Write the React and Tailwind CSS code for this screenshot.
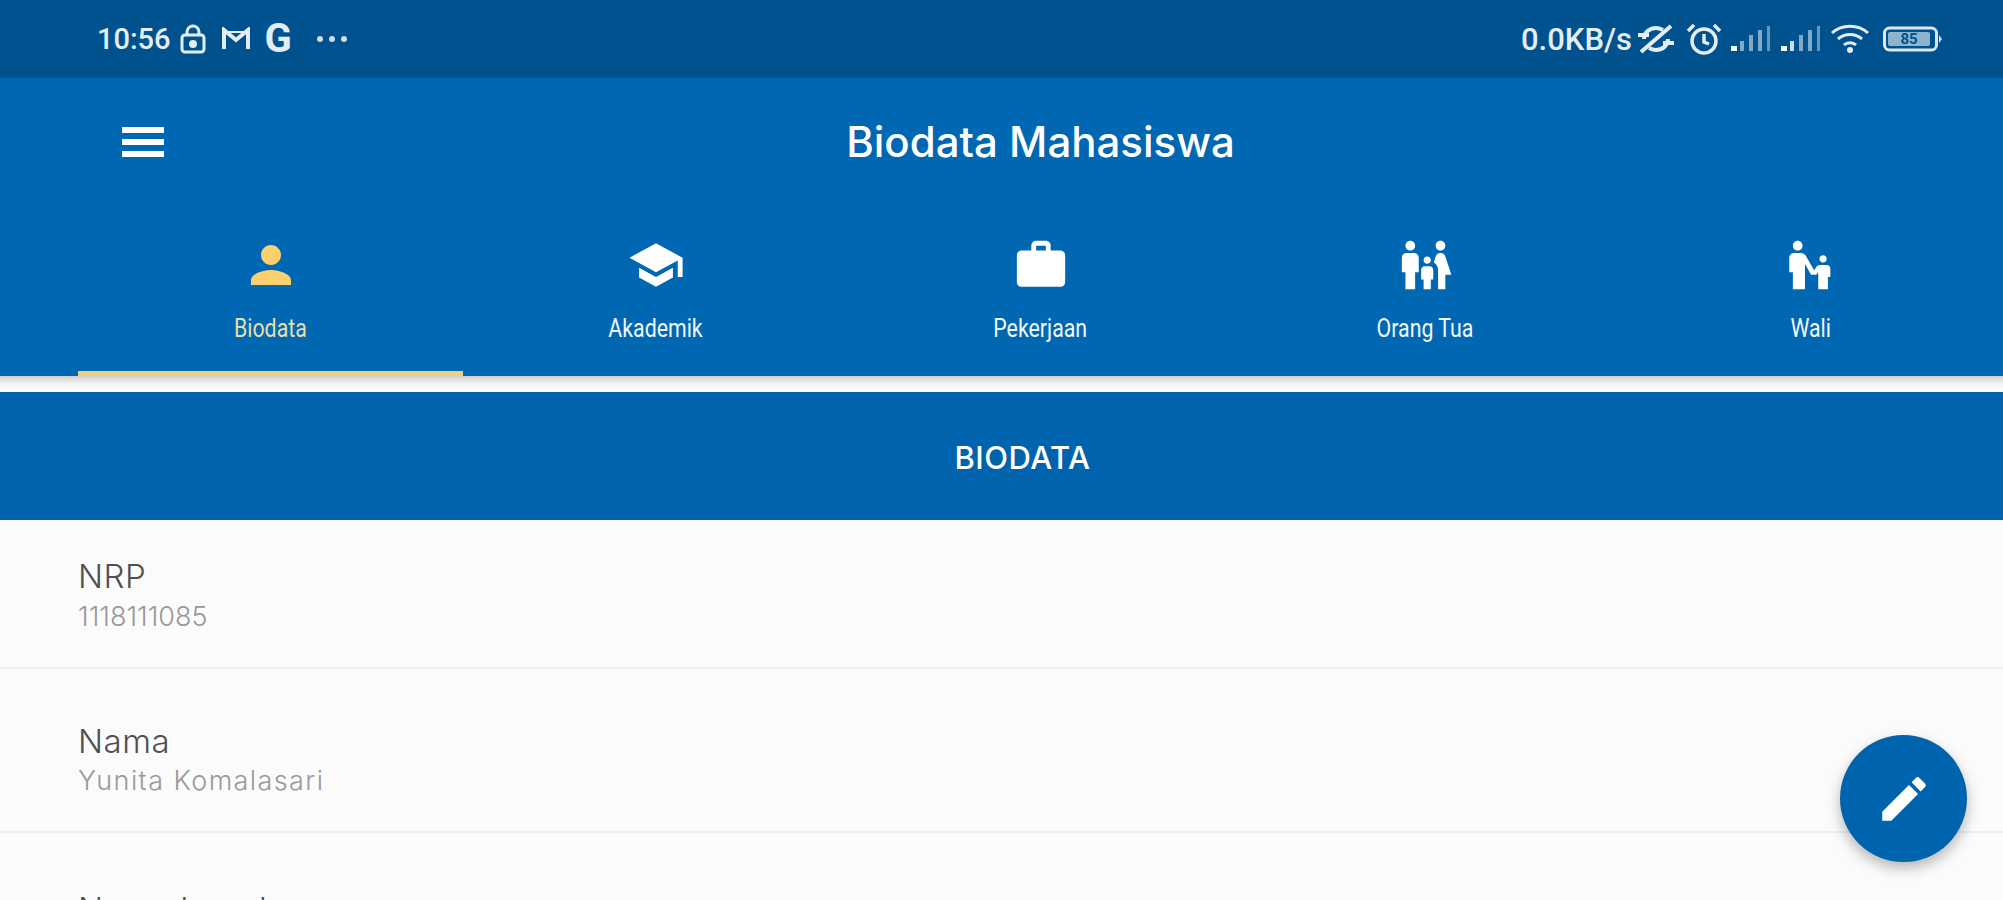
import React from "react";
import { MdPerson, MdSchool, MdWork, MdFamilyRestroom, MdEscalatorWarning, MdEdit } from "react-icons/md";

const tabs = [
  { label: "Biodata", Icon: MdPerson, size: 60, active: true },
  { label: "Akademik", Icon: MdSchool, size: 58 },
  { label: "Pekerjaan", Icon: MdWork, size: 58 },
  { label: "Orang Tua", Icon: MdFamilyRestroom, size: 58 },
  { label: "Wali", Icon: MdEscalatorWarning, size: 58 },
];

const rows = [
  { label: "NRP", value: "1118111085", cls: "h-[149px] pt-[37px]", valueCls: "mt-[3px]" },
  { label: "Nama", value: "Yunita Komalasari", cls: "h-[164px] pt-[53px]", valueCls: "mt-[2px] tracking-[1.4px]" },
  { label: "Nama Lengkap", value: "", cls: "pt-[57px]", valueCls: "" },
];

function Signal({ strong }) {
  return (
    <svg width="42" height="26" viewBox="0 0 42 26" fill="#fff">
      <rect x="1" y="20" width="6" height="5" />
      <rect x="10" y="15" width="4" height="10" opacity={strong ? 0.8 : 0.5} />
      <rect x="19" y="9" width="4" height="16" opacity="0.5" />
      <rect x="28" y="4" width="4" height="21" opacity="0.5" />
      <rect x="37" y="0" width="3" height="25" opacity="0.4" />
    </svg>
  );
}

function StatusBar() {
  return (
    <div className="h-[78px] bg-[#00528f] flex items-center justify-between pl-[97px] pr-[60px] text-[#e4edf4] font-['Roboto',sans-serif] font-medium">
      <div className="flex items-center">
        <span className="text-[29px] leading-none">10:56</span>
        <svg className="ml-[9px]" width="26" height="30" viewBox="0 0 26 30" fill="none" stroke="#e4edf4" strokeWidth="3">
          <rect x="2" y="11" width="22" height="17" rx="3" />
          <path d="M7 11V8a6 6 0 0 1 12 0v3" />
          <circle cx="13" cy="20" r="2.5" fill="#e4edf4" />
        </svg>
        <svg className="ml-[15px]" width="30" height="24" viewBox="0 0 30 24" fill="none" stroke="#e4edf4" strokeWidth="4">
          <path d="M3 22V3l12 10L27 3v19" />
          <path d="M3 5h24" strokeWidth="2" />
        </svg>
        <span className="ml-[14px] text-[40px] leading-none font-bold">G</span>
        <div className="ml-[25px] flex gap-[6px]">
          <span className="w-[6px] h-[6px] rounded-full bg-[#cfdde9]" />
          <span className="w-[6px] h-[6px] rounded-full bg-[#cfdde9]" />
          <span className="w-[6px] h-[6px] rounded-full bg-[#cfdde9]" />
        </div>
      </div>
      <div className="flex items-center">
        <span className="text-[31px] leading-none">0.0KB/s</span>
        <svg className="ml-[5px]" width="38" height="32" viewBox="0 0 38 32" fill="none" stroke="#e4edf4" strokeWidth="4">
          <path d="M7 16c0-6 5-11 12-11 3 0 5 1 7 2" />
          <path d="M31 16c0 6-5 11-12 11-3 0-5-1-7-2" />
          <path d="M4 29L34 3" />
          <path d="M1 12h11M26 20h11" />
        </svg>
        <svg className="ml-[11px]" width="36" height="34" viewBox="0 0 36 34" fill="none" stroke="#e4edf4" strokeWidth="3.5">
          <circle cx="18" cy="19" r="12" />
          <path d="M18 12v8l5 2" />
          <path d="M2 9l6-6M34 9l-6-6" />
        </svg>
        <div className="ml-[8px]"><Signal /></div>
        <div className="ml-[8px]"><Signal strong /></div>
        <svg className="ml-[8px]" width="40" height="30" viewBox="0 0 40 30" fill="none" stroke="#e4edf4" strokeWidth="3">
          <path d="M2 9c10-9 26-9 36 0" />
          <path d="M8 15c7-6 17-6 24 0" />
          <path d="M14 21c3-3 9-3 12 0" />
          <circle cx="20" cy="26" r="3" fill="#e4edf4" stroke="none" />
        </svg>
        <svg className="ml-[13px]" width="60" height="26" viewBox="0 0 60 26" fill="none">
          <rect x="1.5" y="2" width="52" height="22" rx="5" stroke="#dbe6ef" strokeWidth="3" />
          <rect x="5" y="6" width="42" height="14" rx="2" fill="#8fb2cd" />
          <path d="M56 9l3 4-3 4z" fill="#dbe6ef" />
          <text x="26" y="18" fontSize="15" fontWeight="700" textAnchor="middle" fill="#00528f" fontFamily="Roboto, sans-serif">85</text>
        </svg>
      </div>
    </div>
  );
}

function Tabs() {
  return (
    <div className="flex pl-[78px] h-[143px]">
      {tabs.map(({ label, Icon, size, active }) => (
        <div key={label} className="relative w-[385px] flex flex-col items-center">
          <div className="h-[64px] flex items-center justify-center">
            <Icon size={size} color={active ? "#fdd06e" : "#ffffff"} />
          </div>
          <span className={`text-[26px] leading-[28px] mt-[17px] scale-x-[0.82] font-['Roboto',sans-serif] ${active ? "text-[#e6dfa6]" : "text-[#f2f6fa]"}`}>
            {label}
          </span>
          {active && <div className="absolute bottom-0 left-0 right-0 h-[5px] bg-[#f2cf77]" />}
        </div>
      ))}
    </div>
  );
}

export default function App() {
  return (
    <div className="relative h-[900px] overflow-hidden bg-[#fbfbfb] font-['Inter',sans-serif]">
      <StatusBar />
      <div className="bg-[#0067b3]">
        <div className="relative h-[155px] flex items-center justify-center pl-[78px]">
          <div className="absolute left-[122px] top-[49px] flex flex-col gap-[6px] w-[42px]">
            <span className="h-[6px] bg-white" />
            <span className="h-[6px] bg-white" />
            <span className="h-[6px] bg-white" />
          </div>
          <h1 className="text-[42px] font-medium text-white mt-[-28px]">Biodata Mahasiswa</h1>
        </div>
        <Tabs />
      </div>
      <div className="h-[16px] bg-gradient-to-b from-[#cfcfcf] via-[#f4f4f4] to-white" />
      <div className="h-[128px] bg-[#0063ad] flex items-center justify-center pl-[42px]">
        <span className="text-[31px] tracking-[0.5px] font-medium text-white mt-[4px]">BIODATA</span>
      </div>
      {rows.map((row) => (
        <div key={row.label} className={`${row.cls} pl-[78px] border-b-2 border-[#eeeeee] last:border-b-0`}>
          <div className="text-[33px] leading-[38px] tracking-[0.5px] font-light text-[#4f4f4f]">{row.label}</div>
          <div className={`${row.valueCls} text-[27px] leading-[38px] font-light text-[#999999]`}>{row.value}</div>
        </div>
      ))}
      <button className="absolute left-[1840px] top-[735px] w-[127px] h-[127px] rounded-full bg-[#0063ad] flex items-center justify-center shadow-[0_6px_14px_rgba(0,0,0,0.28)]">
        <MdEdit size={58} color="#ffffff" />
      </button>
    </div>
  );
}
